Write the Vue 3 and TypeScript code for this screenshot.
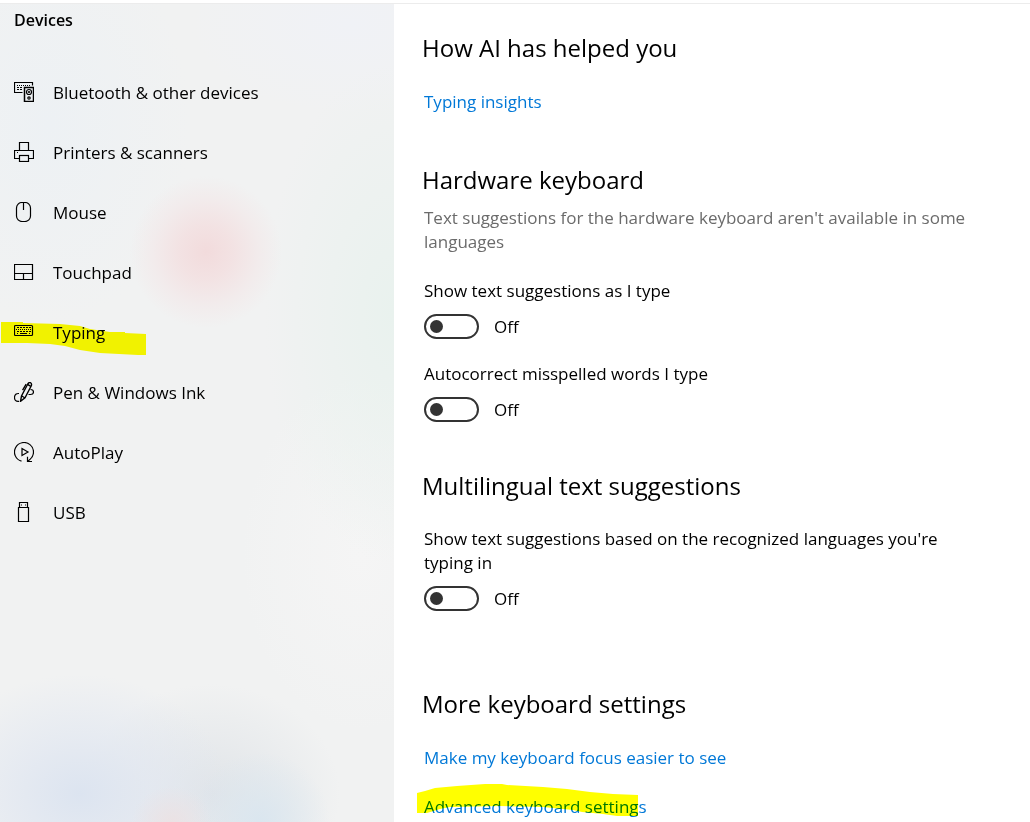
<script setup lang="ts">
import { ref } from 'vue'

interface NavItem {
  id: string
  label: string
  active?: boolean
}

const items: NavItem[] = [
  { id: 'bluetooth', label: 'Bluetooth & other devices' },
  { id: 'printers', label: 'Printers & scanners' },
  { id: 'mouse', label: 'Mouse' },
  { id: 'touchpad', label: 'Touchpad' },
  { id: 'typing', label: 'Typing', active: true },
  { id: 'pen', label: 'Pen & Windows Ink' },
  { id: 'autoplay', label: 'AutoPlay' },
  { id: 'usb', label: 'USB' },
]

const suggestions = ref(false)
const autocorrect = ref(false)
const multilingual = ref(false)
</script>

<template>
  <div class="window">
    <nav class="sidebar" aria-label="Devices">
      <h1 class="title">Devices</h1>
      <ul class="menu">
        <li v-for="item in items" :key="item.id" class="row">
          <a class="item" :href="'#' + item.id" :aria-current="item.active ? 'page' : undefined">
            <svg class="icon" viewBox="0 0 20 20" aria-hidden="true">
              <g v-if="item.id === 'bluetooth'">
                <path d="M8.500 10.500H.5V.5H18.500V3.500" />
                <path d="M3 3.500H17" stroke-dasharray="1 1" />
                <path d="M3 5.500H5M6 5.500H8M3 7.500H5M6 7.500H8" />
                <rect x="10.500" y="5.500" width="9" height="14" stroke-width="1.500" />
                <circle cx="15" cy="10" r="2.500" />
                <circle cx="15" cy="10" r=".5" />
                <circle cx="15" cy="16" r="1.200" />
              </g>
              <g v-else-if="item.id === 'printers'">
                <path d="M5.500 8.500V.5H14.500V8.500" />
                <path d="M5 16.500H.5V8.500H19.500V16.500H15" />
                <rect x="5.500" y="13.500" width="9" height="6" />
                <path d="M3 10.500H4" />
              </g>
              <g v-else-if="item.id === 'mouse'">
                <rect x="2.500" y=".5" width="14" height="19" rx="5.500" />
                <path d="M9.500 1V8" />
              </g>
              <g v-else-if="item.id === 'touchpad'">
                <path d="M.5 2.500H18.500V17.500H.5ZM.5 11.500H18.500M9.500 11.500V17.500" />
              </g>
              <g v-else-if="item.id === 'typing'">
                <rect x=".5" y="3.500" width="18" height="10" rx="1" />
                <path d="M3 5.500H17" stroke-dasharray="2 1" />
                <path d="M2 7.500H17" stroke-dasharray="1 1" />
                <path d="M3 9.500H17" stroke-dasharray="2 1" />
                <path d="M3 11.500H4M6 11.500H13M15 11.500H16" />
              </g>
              <g v-else-if="item.id === 'pen'">
                <path d="M6.500 19.300L7.500 14L13.800 2Q15.200 -.2 16.600 .8T17.300 3.800L11 15.900Z" stroke-width="1.400" />
                <path d="M13.500 2.300L16.800 4.300M12.200 2.200L8.600 8.200M7.800 14L11 16" stroke-width="1.400" />
                <path d="M5 11.500H4.500C2 11.500 .5 13 .5 15.500C.5 18 2 19.300 4 19.300H5" />
                <path d="M14.500 12.500H16.500C18.500 12.500 19.500 11.500 19.500 10C19.500 8.500 18.500 7.500 16.500 7.500" />
              </g>
              <g v-else-if="item.id === 'autoplay'">
                <path d="M7.500 19.200A9.500 9.500 0 1 1 16 17.400L13.500 19.500" />
                <path d="M13.500 14.800V19.500H18" />
                <path d="M8 6.500V13.500L14 10Z" />
              </g>
              <g v-else>
                <path d="M5.500 5.500V.5H13.500V5.500" />
                <path d="M4.500 5.500H14.500V19.500H4.500Z" />
                <path d="M7 3H8M11 3H12" />
              </g>
            </svg>
            <span>{{ item.label }}</span>
          </a>
          <svg v-if="item.active" class="marker nav-marker" viewBox="0 0 146 60" aria-hidden="true">
            <path d="M1 19H23V20L60 21L80 23L90 26L110 29H125V30L146 31V52H138L100 50L80 47L65 43L50 41L27 40H1Z" />
          </svg>
        </li>
      </ul>
    </nav>

    <main class="content">
      <section>
        <h2>How AI has helped you</h2>
        <a class="link" href="#insights">Typing insights</a>
      </section>

      <section>
        <h2>Hardware keyboard</h2>
        <p class="note">Text suggestions for the hardware keyboard aren't available in some languages</p>
        <div class="setting">
          <label for="suggestions">Show text suggestions as I type</label>
          <div class="switch">
            <input id="suggestions" v-model="suggestions" type="checkbox" role="switch" />
            <span>{{ suggestions ? 'On' : 'Off' }}</span>
          </div>
        </div>
        <div class="setting">
          <label for="autocorrect">Autocorrect misspelled words I type</label>
          <div class="switch">
            <input id="autocorrect" v-model="autocorrect" type="checkbox" role="switch" />
            <span>{{ autocorrect ? 'On' : 'Off' }}</span>
          </div>
        </div>
      </section>

      <section class="languages">
        <h2>Multilingual text suggestions</h2>
        <div class="setting">
          <label for="multilingual">Show text suggestions based on the recognized languages you're typing in</label>
          <div class="switch">
            <input id="multilingual" v-model="multilingual" type="checkbox" role="switch" />
            <span>{{ multilingual ? 'On' : 'Off' }}</span>
          </div>
        </div>
      </section>

      <section class="more">
        <h2>More keyboard settings</h2>
        <a class="link" href="#focus">Make my keyboard focus easier to see</a>
        <a class="link" href="#advanced">
          Advanced keyboard settings
          <svg class="marker link-marker" viewBox="0 0 222 34" aria-hidden="true">
            <path d="M0 10L8 8L18 5L40 3L68 1H85L90 2L126 4L150 6L173 9L196 11L221 12V33H200L186 31L165 29L156 27L126 24L83 23L33 24L23 26L10 30H0Z" />
          </svg>
        </a>
      </section>
    </main>
  </div>
</template>

<style>
body {
  margin: 0;
  background: #fff;
}
</style>

<style scoped>
.window {
  display: grid;
  grid-template-columns: 394px 1fr;
  box-sizing: border-box;
  min-height: 100vh;
  padding-top: 3px;
  color: #000;
  font: 17px/24px "Segoe UI", "Open Sans", "Noto Sans", sans-serif;
}

h1,
h2,
p,
ul {
  margin: 0;
  padding: 0;
  font-weight: 400;
}

.sidebar {
  border-top: 1px solid #ececec;
  background:
    radial-gradient(circle 76px at 206px 248px, #f2dbdc 0%, #f3dedfcc 35%, #f3e5e680 70%, #f3e8e900 100%),
    radial-gradient(ellipse 130px 250px at 100% 310px, #e9f2ee 0%, #e9f2ee00 100%),
    radial-gradient(ellipse 40px 36px at 172px 100%, #ebe2e4 0%, #ebe2e400 100%),
    radial-gradient(ellipse 70px 70px at 260px 100%, #dae6ef 0%, #dae6ef00 100%),
    radial-gradient(ellipse 150px 120px at 80px 790px, #dce4f0 0%, #e1e7f1b3 45%, #e8ecf300 100%),
    radial-gradient(ellipse 130px 110px at 210px 790px, #e0e4e8 0%, #e0e4e800 100%),
    radial-gradient(ellipse 140px 200px at 50px 120px, #edf1f4 0%, #edf1f400 100%),
    radial-gradient(ellipse 160px 90px at 350px 20px, #f0f2f6 0%, #f0f2f600 100%),
    radial-gradient(ellipse 120px 180px at 360px 550px, #f5f5f5 0%, #f5f5f500 100%),
    #f1f2f2;
}

.title {
  padding: 4px 14px 0;
  font-size: 16px;
  font-weight: 600;
}

.menu {
  margin-top: 31px;
  list-style: none;
}

.row {
  position: relative;
}

.item {
  display: flex;
  align-items: center;
  gap: 19px;
  height: 60px;
  padding: 0 14px;
  color: inherit;
  text-decoration: none;
}

.icon {
  width: 20px;
  height: 20px;
  margin-bottom: 2px;
  fill: none;
  stroke: #000;
  stroke-width: 1.2;
}

.marker {
  position: absolute;
  fill: #ff0;
  mix-blend-mode: multiply;
  pointer-events: none;
}

.nav-marker {
  top: 0;
  left: 0;
  width: 146px;
  height: 60px;
}

.content {
  border-top: 1px solid #ececec;
  padding: 28px 28px 0 30px;
}

section {
  display: flex;
  flex-direction: column;
  align-items: flex-start;
  max-width: 560px;
}

section + section {
  margin-top: 50px;
}

section.languages {
  margin-top: 48px;
}

section.more {
  margin-top: 77px;
}

h2 {
  margin-left: -2px;
  font-size: 24px;
  line-height: 32px;
}

.link {
  position: relative;
  margin-top: 26px;
  color: #0078d7;
  text-decoration: none;
}

.link + .link {
  margin-top: 25px;
}

.link-marker {
  top: -12px;
  left: -7px;
  width: 222px;
  height: 34px;
}

.note {
  margin-top: 10px;
  color: #6b6b6b;
}

.setting {
  margin-top: 25px;
}

.setting + .setting {
  margin-top: 23px;
}

.switch {
  display: flex;
  align-items: center;
  gap: 15px;
  height: 25px;
  margin-top: 11px;
}

.switch input {
  appearance: none;
  display: flex;
  align-items: center;
  box-sizing: border-box;
  width: 55px;
  height: 25px;
  margin: 0;
  padding: 0 4px;
  border: 2px solid #333;
  border-radius: 13px;
}

.switch input::before {
  content: "";
  width: 13px;
  height: 13px;
  border-radius: 50%;
  background: #333;
}

.switch input:checked {
  justify-content: flex-end;
  border-color: #0078d7;
  background: #0078d7;
}

.switch input:checked::before {
  background: #fff;
}
</style>
